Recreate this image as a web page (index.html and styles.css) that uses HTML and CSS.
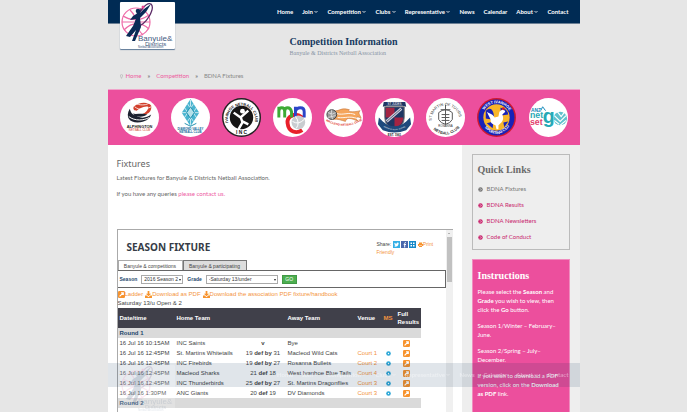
FILE: index.html
```html
<!DOCTYPE html>
<html lang="en">
<head>
<meta charset="utf-8">
<title>BDNA Fixtures</title>
<link rel="stylesheet" href="styles.css">
</head>
<body>
<svg class="defs" aria-hidden="true">
  <symbol id="logo" viewBox="0 0 55 47">
    <g fill="none" stroke="#ee6aa7" stroke-width="1.2">
      <circle cx="16" cy="20" r="14"/>
      <path d="M3 14Q16 22 29 13M4 28Q16 16 29 27M10 8Q22 20 11 33M22 7Q10 20 23 33M2 20H30"/>
    </g>
    <path d="M15 26C16 10 27 0 31 2C35 6 28 22 15 26" fill="none" stroke="#5b2a66" stroke-width="1.300"/>
    <path d="M21 6C18 10 17 12 13 14L10 18L16 17L13 24L6 34L10 35L16 28L12 39L15 39L21 25L20 16L26 10L31 2L24 7L20 11Z" fill="#0a2a56"/>
    <circle cx="18" cy="9" r="2.300" fill="#0a2a56"/><circle cx="23" cy="5" r="1.5" fill="#ec3f8f"/>
    <text x="18" y="39" font-size="8" fill="#3f5a80">Banyule&amp;</text>
    <text x="25" y="44" font-size="6" fill="#3f5a80">Districts</text>
    <text x="18" y="46" font-size="3" fill="#3f5a80">Netball Association</text>
  </symbol>
  <symbol id="go" viewBox="0 0 8 8"><rect width="8" height="8" rx="1.5" fill="#f7932e"/><path d="M1.800 6.200L5.500 2.500M3.500 2H6V4.500" fill="none" stroke="#fff" stroke-width="1.400"/></symbol>
  <symbol id="down" viewBox="0 0 8 8"><path d="M3 0H5V3H7L4 6L1 3H3ZM0 5H2L4 7L6 5H8V8H0Z" fill="#f7932e"/></symbol>
  <symbol id="chev" viewBox="0 0 4 4"><path d="M.5 1L2 2.5L3.500 1" fill="none" stroke="currentColor" stroke-width=".8"/></symbol>
  <symbol id="arrow" viewBox="0 0 6 6"><circle cx="3" cy="3" r="2.700" fill="currentColor"/><path d="M2.500 1.700L3.800 3L2.500 4.300" fill="none" stroke="#fff" stroke-width=".8"/></symbol>
  <symbol id="info" viewBox="0 0 5 5"><circle cx="2.500" cy="2.500" r="2.300" fill="#2ba6d6"/><circle cx="2.500" cy="2.500" r=".7" fill="#fff"/></symbol>
</svg>

<div class="page">
  <header class="top">
    <a class="logo" href="#" aria-label="Banyule and Districts"><svg><use href="#logo"/></svg></a>
    <nav class="menu">
      <a href="#">Home</a>
      <a href="#">Join <svg><use href="#chev"/></svg></a>
      <a href="#">Competition <svg><use href="#chev"/></svg></a>
      <a href="#">Clubs <svg><use href="#chev"/></svg></a>
      <a href="#">Representative <svg><use href="#chev"/></svg></a>
      <a href="#">News</a>
      <a href="#">Calendar</a>
      <a href="#">About <svg><use href="#chev"/></svg></a>
      <a href="#">Contact</a>
    </nav>
  </header>

  <div class="title">
    <div>
      <h1>Competition Information</h1>
      <p>Banyule &amp; Districts Netball Association</p>
    </div>
  </div>

  <nav class="crumbs">
    <svg class="pin" viewBox="0 0 4 6"><path d="M2 5.500L.6 2.500A1.500 1.500 0 1 1 3.400 2.500Z" fill="none" stroke="#aaa" stroke-width=".7"/></svg>
    <a href="#">Home</a><b>»</b><a href="#">Competition</a><b>»</b><span>BDNA Fixtures</span>
  </nav>

  <div class="clubs">
    <svg viewBox="0 0 40 40"><circle cx="20" cy="20" r="20" fill="#fff"/>
      <path d="M14 9C20 3 30 4 32 8C33 14 28 18 22 17C27 15 29 12 29 9C24 8 20 11 17 13C15 13 13 12 14 9Z" fill="#d2402c"/><path d="M15 9C20 13 26 12 32 9M17 6C22 8 28 7 30 5" fill="none" stroke="#fff" stroke-width=".8"/>
      <path d="M10 11C5 20 10 25 18 25C26 25 30 22 32 17C27 21 21 21 16 18C12 17 11 14 10 11ZM13 16C18 21 25 19 28 17C24 15 17 17 13 16Z" fill="#1c2230"/><path d="M9 19C15 24 25 23 30 20" stroke="#fff" fill="none"/>
      <text x="20" y="31" font-size="4" font-weight="700" text-anchor="middle" fill="#222">ALPHINGTON</text><text x="20" y="34" font-size="3" text-anchor="middle" fill="#d2402c">NETBALL CLUB</text></svg>
    <svg viewBox="0 0 40 40"><circle cx="20" cy="20" r="20" fill="#fff"/>
      <path d="M20 1L29 15L20 29L11 15Z" fill="#49b4cf"/><path d="M17 6L26 20M14 10L23 24M23 6L14 20M26 10L17 24M11 15H29M20 2V28" stroke="#fff" stroke-width=".7"/><path d="M20 9L24 15L20 21L16 15Z" fill="#b5e1ea" stroke="#1f8faf"/><path d="M14 26L20 29L26 26" fill="none" stroke="#1f8faf"/>
      <text x="20" y="33" font-size="3" font-weight="700" text-anchor="middle" fill="#12699a">DIAMOND VALLEY</text><text x="20" y="36" font-size="3" font-weight="700" text-anchor="middle" fill="#12699a">NETBALL CLUB</text></svg>
    <svg viewBox="0 0 40 40"><circle cx="20" cy="20" r="20" fill="#222"/><circle cx="20" cy="20" r="18.500" fill="#fff"/><circle cx="20" cy="20" r="12" fill="#161616"/>
      <path id="a3" d="M7.500 28A14 14 0 1 1 32.500 28" fill="none"/><text font-size="4" font-weight="700" fill="#111"><textPath href="#a3" startOffset="3">IVANHOE NETBALL CLUB</textPath></text>
      <text x="20" y="37" font-size="5" font-weight="700" text-anchor="middle" fill="#111">I N C</text>
      <circle cx="21" cy="13.500" r="2.500" fill="#fff"/><path d="M12 15L19 20L27 13M19 19L21 25L17 32M21 24L27 27" fill="none" stroke="#fff" stroke-width="2.500"/></svg>
    <svg viewBox="0 0 40 40"><circle cx="20" cy="20" r="20" fill="#fff"/>
      <path d="M30 20C22 14 14 19 15 26C16 35 24 37 30 33" fill="none" stroke="#e8202a" stroke-width="4"/>
      <path d="M6 20V9M6 14Q6 10 9 10T12 14V20M12 14Q12 10 15 10T19 14V20" fill="none" stroke="#3daa35" stroke-width="3"/><path d="M23 20V9M23 14Q24 10 28 10T32 14V20" fill="none" stroke="#2b45c8" stroke-width="3"/>
      <circle cx="26" cy="25" r="7" fill="#c9cdd0"/><path d="M20 24Q26 28 32 22M23 19Q28 25 24 31" fill="none" stroke="#fff"/></svg>
    <svg viewBox="0 0 40 40"><circle cx="20" cy="20" r="20" fill="#fff"/>
      <path d="M7 13C16 15 16 9 26 12C23 14 30 15 37 13C34 16 38 18 38 21C34 18 31 20 35 24C29 21 23 19 22 24C18 23 14 21 9 22Z" fill="#f5a55b" stroke="#c3743a" stroke-width=".6"/><path d="M13 16C20 18 25 14 32 17M14 20C22 21 26 18 34 21" fill="none" stroke="#fff" stroke-width=".9"/>
      <circle cx="8" cy="17" r="5" fill="#999" stroke="#444"/><path d="M4 15Q9 18 12 15M8 12Q6 17 9 22M4 20L12 18" fill="none" stroke="#eee" stroke-width=".7"/>
      <path id="a5" d="M1 23Q20 34 39 23" fill="none"/><text font-size="3" font-weight="700" fill="#e0301e"><textPath href="#a5" startOffset="1">MACLEOD NETBALL CLUB</textPath></text></svg>
    <svg viewBox="0 0 40 40"><circle cx="20" cy="20" r="20" fill="#fff"/>
      <path d="M9 4H31L32 9L28 8H12L8 9Z" fill="#1e3764"/><text x="20" y="7.500" font-size="3" text-anchor="middle" fill="#fff">ST JUDES</text>
      <path d="M10 9H30V20Q30 29 20 32Q10 29 10 20Z" fill="#1e3764" stroke="#777"/><path d="M11 10H20V20H11ZM20 20H29Q29 28 20 31Z" fill="#a42443"/><path d="M12 24L27 11" stroke="#ccd" stroke-width="3"/><path d="M12 24L27 11" stroke="#567"/>
      <path d="M4 20L8 24Q20 34 32 24L36 20L37 27L32 33Q20 38 8 33L3 27Z" fill="#1e4a7c"/><path id="a6" d="M6 28Q20 38 34 28" fill="none"/><text font-size="2" fill="#fff"><textPath href="#a6" startOffset="3">FAITHFUL IN ALL THINGS</textPath></text><text x="20" y="39" font-size="3" font-weight="700" text-anchor="middle" fill="#222">EST. 1961</text></svg>
    <svg viewBox="0 0 40 40"><circle cx="20" cy="20" r="20" fill="#fff"/>
      <path id="a7" d="M8 29A14 14 0 1 1 32 29" fill="none"/><text font-size="4" fill="#333"><textPath href="#a7" startOffset="6">ST MARTIN OF TOURS</textPath></text>
      <path id="b7" d="M5 30Q20 45 35 30" fill="none"/><text font-size="4" font-weight="700" fill="#333"><textPath href="#b7" startOffset="3">NETBALL CLUB</textPath></text>
      <text x="20" y="30" font-size="3" text-anchor="middle" fill="#333">ROSANNA</text>
      <path d="M20 7V27M15 12H25M13 15Q20 9 27 15V22Q25 26 20 27Q15 26 13 22ZM16 17H24M16 20H24M16 23H24" fill="none" stroke="#555" stroke-width="1"/></svg>
    <svg viewBox="0 0 40 40"><circle cx="20" cy="20" r="20" fill="#cf1830"/><circle cx="20" cy="20" r="18.500" fill="#1722b8"/><circle cx="20" cy="20" r="13.500" fill="#f7b52a"/>
      <path d="M9 13Q15 8 17 16T9 21ZM24 10Q31 10 32 17L25 18ZM10 26L17 24L16 31ZM27 25L32 24L28 30Z" fill="#1722b8"/><path d="M10 14C13 16 16 16 18 20L22 19L23 14L27 11L29 14L26 17Q28 22 25 25L22 28L22 32L20 32L19 28Q13 26 14 22Z" fill="#fff"/><circle cx="27" cy="11" r="1.500" fill="#cf1830"/>
      <path id="a8" d="M6 15A15 15 0 0 1 34 15" fill="none"/><text font-size="4" font-weight="700" fill="#fff"><textPath href="#a8" startOffset="3">WEST IVANHOE</textPath></text><path id="b8" d="M6 28Q20 46 34 28" fill="none"/><text font-size="4" font-weight="700" fill="#fff"><textPath href="#b8" startOffset="3">SPORTING CLUB</textPath></text></svg>
    <svg viewBox="0 0 40 40"><circle cx="20" cy="20" r="20" fill="#fff"/>
      <text x="2" y="14" font-size="5" font-weight="700" fill="#1688b5">ANZ</text><path d="M12 13L14 9L17 13" fill="none" stroke="#1688b5"/><text x="1" y="21" font-size="9" font-weight="700" fill="#27a9b6">net</text><text x="1" y="28" font-size="9" font-weight="700" fill="#e2406d">set</text><text x="14" y="26" font-size="20" font-weight="700" fill="#27a9b6">g</text>
      <circle cx="32" cy="21" r="7" fill="#60c1cd"/><path d="M26 18L32 24L38 18M26 23L31 27M29 14L33 19L36 15M32 28L38 23" fill="none" stroke="#fff" stroke-width="1.200"/></svg>
  </div>

  <div class="body">
    <main>
      <h2>Fixtures</h2>
      <p>Latest Fixtures for Banyule &amp; Districts Netball Association.</p>
      <p>If you have any queries <a href="#">please contact us.</a></p>

      <section class="frame">
        <div class="doc">
          <div class="dochead">
            <h3>SEASON FIXTURE</h3>
            <div class="share">Share:
              <svg viewBox="0 0 7 7"><rect width="7" height="7" fill="#35b0e6"/><path d="M1 5.500Q3 6 4.500 5Q5.500 4 5.500 2.500L6 2L5 1.700Q3.800 1.300 3.600 2.700Q2.500 2.700 1.500 1.700Q1 3 2 4L1.400 4L2.500 4.900Z" fill="#fff"/></svg>
              <svg viewBox="0 0 7 7"><rect width="7" height="7" fill="#4a68ad"/><path d="M5 1.500H4.500Q3.700 1.500 3.700 2.500V6.500M2.700 3.500H5" stroke="#fff" fill="none"/></svg>
              <svg viewBox="0 0 7 7"><rect width="7" height="7" fill="#1789c9"/><path d="M1.500 1.500H3V3H1.500ZM4 1.500H5.500V3H4ZM1.500 4H3V5.500H1.500ZM4 4H5.500V5.500H4Z" fill="#fff"/></svg>
              <a href="#"><svg class="print" viewBox="0 0 5 5"><path d="M1 2V.5H4V2M0 2H5V4H4V3H1V4H0ZM1 3.500H4V5H1Z" fill="#f7932e"/></svg>Print Friendly</a>
            </div>
          </div>
          <div class="tabs"><button class="on">Banyule &amp; competitions</button><button>Banyule &amp; participating</button></div>
          <form class="filter">
            <label for="season">Season</label>
            <span class="pick season"><select id="season"><option>2016 Season 2</option></select></span>
            <label for="grade">Grade</label>
            <span class="pick grade"><select id="grade"><option>-Saturday 13/under</option></select></span>
            <button type="button">GO</button>
          </form>
          <div class="downloads">
            <a href="#"><svg><use href="#go"/></svg>Ladder</a>
            <a href="#"><svg><use href="#down"/></svg>Download as PDF</a>
            <a href="#"><svg><use href="#down"/></svg>Download the association PDF fixture/handbook</a>
          </div>
          <div class="grade-name">Saturday 13/u Open &amp; 2</div>
          <table>
            <colgroup><col class="c1"><col class="c2"><col class="c3"><col class="c4"><col class="c5"><col class="c6"><col class="c7"></colgroup>
            <thead><tr><th>Date/time</th><th>Home Team</th><th></th><th>Away Team</th><th>Venue</th><th class="ms">MS</th><th>Full Results</th></tr></thead>
            <tbody>
              <tr class="round"><th colspan="7">Round 1</th></tr>
              <tr><td>16 Jul 16 10:15AM</td><td>INC Saints</td><td><b>v</b></td><td>Bye</td><td></td><td></td><td><svg><use href="#go"/></svg></td></tr>
              <tr><td>16 Jul 16 12:45PM</td><td>St. Martins Whitetails</td><td>19 <b>def by</b> 31</td><td>Macleod Wild Cats</td><td><a href="#">Court 1</a></td><td><svg class="i"><use href="#info"/></svg></td><td><svg><use href="#go"/></svg></td></tr>
              <tr><td>16 Jul 16 12:45PM</td><td>INC Firebirds</td><td>19 <b>def by</b> 27</td><td>Rosanna Bullets</td><td><a href="#">Court 2</a></td><td><svg class="i"><use href="#info"/></svg></td><td><svg><use href="#go"/></svg></td></tr>
              <tr><td>16 Jul 16 12:45PM</td><td>Macleod Sharks</td><td>21 <b>def</b> 18</td><td>West Ivanhoe Blue Tails</td><td><a href="#">Court 4</a></td><td><svg class="i"><use href="#info"/></svg></td><td><svg><use href="#go"/></svg></td></tr>
              <tr><td>16 Jul 16 12:45PM</td><td>INC Thunderbirds</td><td>25 <b>def by</b> 27</td><td>St. Martins Dragonflies</td><td><a href="#">Court 3</a></td><td><svg class="i"><use href="#info"/></svg></td><td><svg><use href="#go"/></svg></td></tr>
              <tr><td>16 Jul 16 1:30PM</td><td>ANC Giants</td><td>20 <b>def</b> 19</td><td>DV Diamonds</td><td><a href="#">Court 3</a></td><td><svg class="i"><use href="#info"/></svg></td><td><svg><use href="#go"/></svg></td></tr>
              <tr class="round"><th colspan="7">Round 2</th></tr>
            </tbody>
          </table>
        </div>
        <div class="scroll"><span class="up"></span><span class="thumb"></span></div>
      </section>
    </main>

    <aside>
      <section class="quick">
        <h2>Quick Links</h2>
        <a class="current" href="#"><svg><use href="#arrow"/></svg>BDNA Fixtures</a>
        <a href="#"><svg><use href="#arrow"/></svg>BDNA Results</a>
        <a href="#"><svg><use href="#arrow"/></svg>BDNA Newsletters</a>
        <a href="#"><svg><use href="#arrow"/></svg>Code of Conduct</a>
      </section>
      <section class="instructions">
        <h2>Instructions</h2>
        <p>Please select the <b>Season</b> and <b>Grade</b> you wish to view, then click the <b>Go</b> button.</p>
        <p>Season 1/Winter – February–June.</p>
        <p>Season 2/Spring – July–December.</p>
        <p>If you wish to download a PDF version, click on the <b>Download as PDF</b> link.</p>
      </section>
    </aside>
  </div>
</div>

<div class="ghost" aria-hidden="true">
  <span class="logo"><svg><use href="#logo"/></svg></span>
  <div class="menu">
    <span>Home</span><span>Join <svg><use href="#chev"/></svg></span><span>Competition <svg><use href="#chev"/></svg></span><span>Clubs <svg><use href="#chev"/></svg></span><span>Representative <svg><use href="#chev"/></svg></span><span>News</span><span>Calendar</span><span>About <svg><use href="#chev"/></svg></span><span>Contact</span>
  </div>
</div>
</body>
</html>
```
FILE: styles.css
```css
* { box-sizing: border-box; }
html { height: 100%; overflow: hidden; }
body { margin: 0; height: 100%; overflow: hidden; background: #e6e6e6; color: #666; font: 6px/10px Lato, "Noto Sans", sans-serif; }
h1, h2, h3, p { margin: 0; }
a { color: #ed5b9f; text-decoration: none; }
button, select { font: inherit; }
.defs { position: absolute; width: 0; height: 0; }
.page { width: 68%; min-width: 472px; margin: 0 auto; }

.top { position: relative; height: 24px; background: #002b54; border-bottom: 1px solid #6b7f94; }
.logo { position: absolute; left: 12px; top: 2px; width: 55px; height: 47px; background: #fff; box-shadow: 0 1px 1px #5d7896; border-radius: 1px; font-family: "Liberation Sans", sans-serif; }
.logo svg { display: block; width: 55px; height: 47px; }
.menu { display: flex; justify-content: flex-end; gap: 9px; height: 23px; align-items: center; padding-right: 11px; font-weight: 700; white-space: nowrap; color: #fff; }
.menu a { color: #fff; }
.menu svg { width: 4px; height: 4px; }

.title { display: flex; justify-content: center; padding-top: 12px; height: 46px; font-family: "Liberation Serif", serif; }
.title h1 { font-size: 10px; line-height: 12px; color: #173a60; }
.title p { color: #8794a5; font-size: 6px; line-height: 10px; }
.crumbs { display: flex; align-items: center; gap: 6px; height: 19px; padding: 0 0 7px 12px; color: #888; }
.crumbs b { color: #777; }
.pin { width: 3px; height: 5px; margin-right: -3px; }

.clubs { display: flex; justify-content: space-between; align-items: center; height: 56px; padding: 0 12px; background: #ec4f9d; border-top: 1px solid #f0a4ca; font-family: "Liberation Sans", sans-serif; }
.clubs svg { width: 39px; height: 39px; }

.body { display: flex; min-height: 412px; }
main { flex: 1; padding: 12px 9px 0; background: #fff; }
main h2 { font: 400 9px/14px "Noto Sans", sans-serif; color: #666; }
main p { margin-bottom: 6px; }
main h2 + p { margin-top: 2px; }

.frame { display: flex; margin-top: 30px; height: 260px; border: 1px solid #aaa; border-right: 0; font-family: "Liberation Sans", sans-serif; color: #444; }
.doc { flex: 1; }
.doc a { color: #f39340; }
.dochead { display: flex; justify-content: space-between; height: 30px; padding: 9px 6px 0 9px; }
.dochead h3 { font: 700 10px/16px "Noto Sans", sans-serif; color: #363c46; }
.share { width: 63px; padding-top: 1px; line-height: 8px; font-size: 5px; }
.share svg { width: 7px; height: 7px; vertical-align: middle; }
.share .print { width: 5px; height: 5px; }
.tabs { display: flex; }
.tabs button { width: 64px; height: 10px; padding: 0; font-size: 5px; line-height: 8px; color: #444; background: #ddd; border: 1px solid #777; border-bottom: 0; }
.tabs .on { width: 65px; background: #fff; border-color: #aaa; }
.filter { display: flex; align-items: center; gap: 4px; height: 18px; padding-left: 2px; border: 1px solid #666; border-left: 0; }
.filter label { font-weight: 700; font-size: 5px; color: #24486c; }
.pick { position: relative; height: 9px; }
.pick select { appearance: none; display: block; width: 100%; height: 9px; padding: 0 0 0 2px; font-size: 5px; line-height: 7px; color: #333; background: #fff; border: 1px solid #aaa; border-radius: 0; }
.pick::after { content: ""; position: absolute; right: 2px; top: 4px; border: 1px solid transparent; border-top: 2px solid #222; }
.season { width: 42px; }
.grade { width: 72px; }
.filter button { width: 15px; height: 9px; padding: 0; font-size: 5px; line-height: 7px; color: #fff; background: #4caf50; border: 1px solid #429946; }
.downloads { display: flex; gap: 2px; height: 10px; margin-top: 1px; white-space: nowrap; }
.downloads svg { width: 7px; height: 7px; vertical-align: middle; }
.grade-name { height: 9px; line-height: 9px; }
table { border-collapse: collapse; table-layout: fixed; width: 303px; }
.c1 { width: 57px; } .c2 { width: 66px; } .c3 { width: 45px; } .c4 { width: 70px; } .c5 { width: 26px; } .c6 { width: 14px; } .c7 { width: 25px; }
th, td { padding: 0 0 0 2px; height: 10px; line-height: 8px; text-align: left; white-space: nowrap; }
thead th { height: 20px; color: #fff; background: #40404a; white-space: normal; }
thead .ms { color: #f39340; }
td:nth-child(3), td:nth-child(6), td:nth-child(7) { text-align: center; padding: 0; }
td:last-child { padding-right: 4px; }
td svg { display: block; width: 7px; height: 7px; margin: 0 auto; }
td svg.i { width: 5px; height: 5px; }
.round th { background: #dadada; color: #24486c; border-bottom: 1px solid #fff; }
.scroll { width: 7px; background: #f0f0f0; }
.up { display: block; width: 2px; margin: 2px auto 3px; border: 1px solid transparent; border-bottom: 1px solid #777; }
.thumb { display: block; width: 5px; height: 45px; margin: 0 auto; background: #c1c1c1; }

aside { width: 118px; padding: 9px 10px 0; background: #eee; }
aside h2 { font: 700 10px/14px "Liberation Serif", serif; }
.quick { height: 96px; padding: 8px 5px; border: 1px solid #bbb; }
.quick h2 { margin-bottom: 4px; color: #6a6a6a; }
.quick a { display: flex; align-items: center; gap: 4px; height: 16px; color: #c9286f; }
.quick .current { color: #777; }
.quick svg { width: 5px; height: 5px; }
.instructions { margin-top: 9px; height: 300px; padding: 9px 5px 0; color: #fff; background: #ec4f9d; border: 1px solid #f08dbf; }
.instructions h2 { margin-bottom: 4px; }
.instructions p { line-height: 9px; margin-bottom: 7px; }

.ghost { position: fixed; left: 0; right: 0; bottom: 25px; width: 68%; min-width: 472px; height: 24px; margin: 0 auto; background: rgba(0, 43, 84, .12); }
.ghost .menu { opacity: .4; }
.ghost .logo { background: rgba(255, 255, 255, .2); box-shadow: none; }
.ghost .logo svg { opacity: .15; }
```
